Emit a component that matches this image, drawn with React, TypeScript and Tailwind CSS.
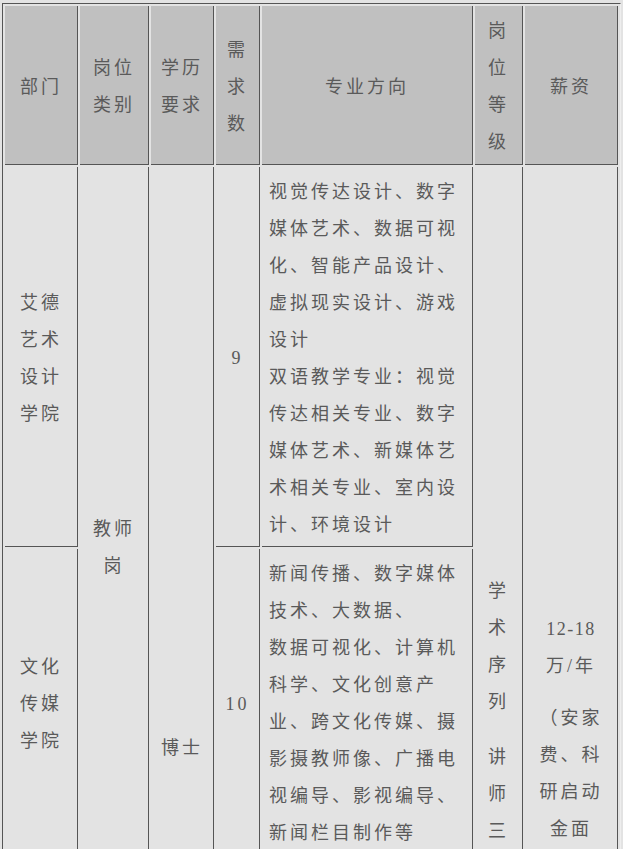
export default function App() {
  const cell = "border-r border-b border-[#555555] p-0 font-normal"
  const head = `${cell} bg-[#c0c0c0] text-center align-middle pt-[4px]`
  const body = `${cell} bg-[#e3e3e3]`

  const row1 = [
    "视觉传达设计、数字",
    "媒体艺术、数据可视",
    "化、智能产品设计、",
    "虚拟现实设计、游戏",
    "设计",
    "双语教学专业：视觉",
    "传达相关专业、数字",
    "媒体艺术、新媒体艺",
    "术相关专业、室内设",
    "计、环境设计",
  ]
  const row2 = [
    "新闻传播、数字媒体",
    "技术、大数据、",
    "数据可视化、计算机",
    "科学、文化创意产",
    "业、跨文化传媒、摄",
    "影摄教师像、广播电",
    "视编导、影视编导、",
    "新闻栏目制作等",
  ]

  return (
    <div
      className="w-[623px] h-[849px] overflow-hidden bg-[#e3e3e3] pt-[3px] pl-[2px] text-[18px] leading-[37px] tracking-[3px] text-[#5a5a5a]"
      style={{ fontFamily: '"Liberation Serif", "Noto Sans CJK SC", serif' }}
    >
      <table className="table-fixed border-separate border-spacing-[2px] border-t border-l border-r border-b border-t-[#555555] border-l-[#555555] border-r-[#eeeeee] border-b-[#eeeeee]">
        <colgroup>
          <col className="w-[73px]" />
          <col className="w-[69px]" />
          <col className="w-[63px]" />
          <col className="w-[44px]" />
          <col className="w-[211px]" />
          <col className="w-[48px]" />
          <col className="w-[93px]" />
        </colgroup>
        <thead>
          <tr className="h-[159px]">
            <th className={head}>部门</th>
            <th className={head}>
              岗位
              <br />
              类别
            </th>
            <th className={head}>
              学历
              <br />
              要求
            </th>
            <th className={head}>
              需<br />求<br />数
            </th>
            <th className={head}>专业方向</th>
            <th className={head}>
              岗<br />位<br />等<br />级
            </th>
            <th className={head}>薪资</th>
          </tr>
        </thead>
        <tbody>
          <tr className="h-[380px]">
            <td className={`${body} text-center align-middle pt-[4px]`}>
              艾德
              <br />
              艺术
              <br />
              设计
              <br />
              学院
            </td>
            <td rowSpan={2} className={`${body} text-center align-top pt-[344px]`}>
              教师
              <br />岗
            </td>
            <td rowSpan={2} className={`${body} text-center align-top pt-[563px]`}>
              博士
            </td>
            <td className={`${body} text-center align-middle pt-[4px]`}>9</td>
            <td className={`${body} align-top pt-[7px] pl-[7px]`}>
              {row1.map((line, i) => (
                <div key={i}>{line}</div>
              ))}
            </td>
            <td rowSpan={2} className={`${body} text-center align-top pt-[406px]`}>
              <div>
                学<br />术<br />序<br />列
              </div>
              <div className="mt-[18px]">
                讲<br />师<br />三
              </div>
            </td>
            <td rowSpan={2} className={`${body} text-center align-top pt-[444px]`}>
              <div className="tracking-[1.5px]">12-18</div>
              <div>万/年</div>
              <div className="mt-[15px]">（安家</div>
              <div>费、科</div>
              <div>研启动</div>
              <div>金面</div>
            </td>
          </tr>
          <tr className="h-[308px]">
            <td className={`${body} text-center align-middle pt-[4px]`}>
              文化
              <br />
              传媒
              <br />
              学院
            </td>
            <td className={`${body} text-center align-middle pt-[4px]`}>10</td>
            <td className={`${body} align-top pt-[7px] pl-[7px]`}>
              {row2.map((line, i) => (
                <div key={i}>{line}</div>
              ))}
            </td>
          </tr>
        </tbody>
      </table>
    </div>
  )
}
